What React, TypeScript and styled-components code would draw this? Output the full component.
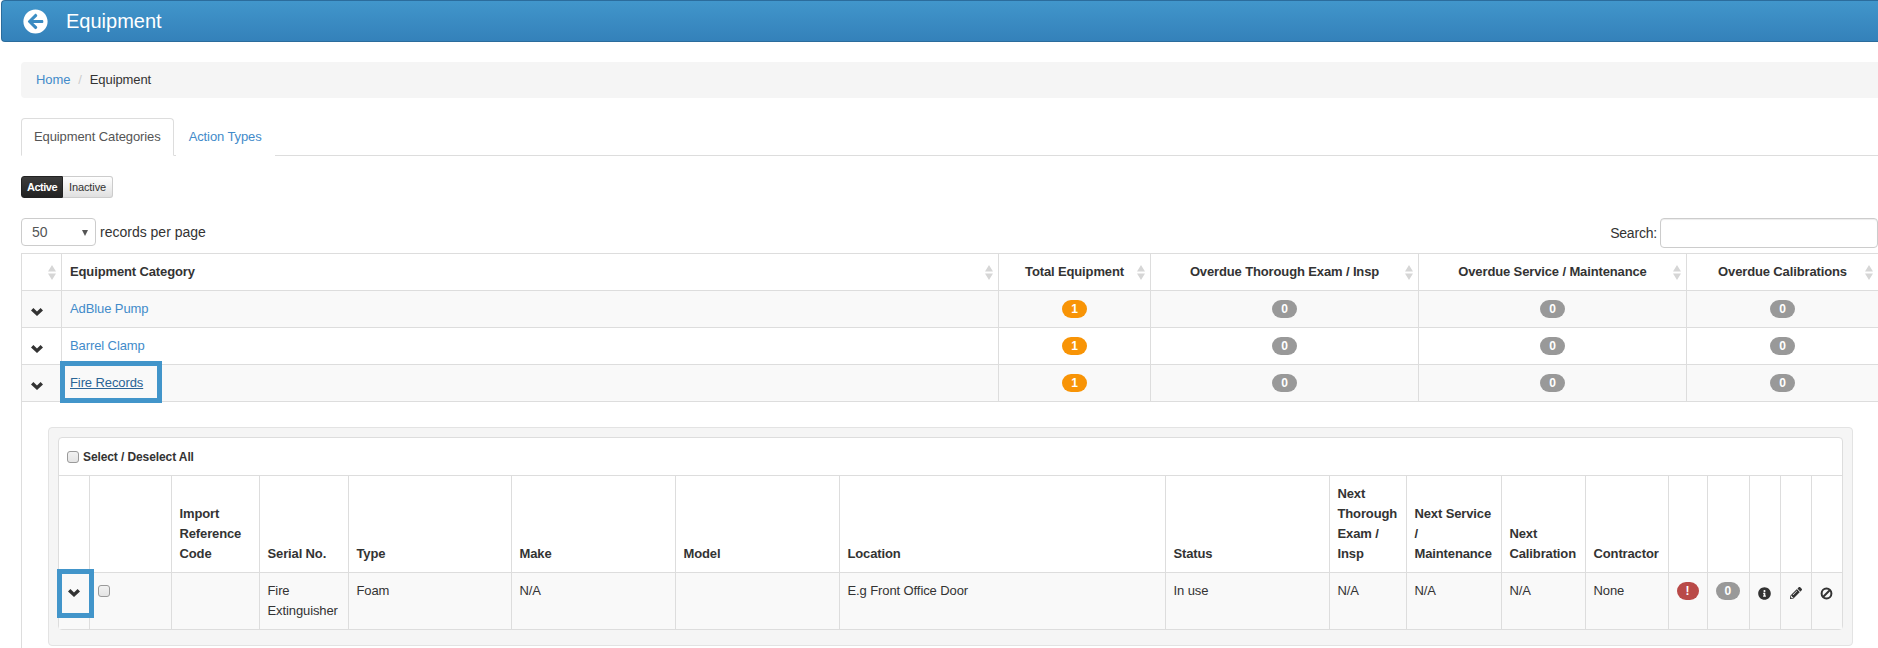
import React from "react";
import styled, { createGlobalStyle } from "styled-components";
import { FaArrowCircleLeft, FaInfoCircle, FaPencilAlt } from "react-icons/fa";

const Global = createGlobalStyle`
  html, body { margin: 0; padding: 0; background: #fff; }
  body { font-family: "Liberation Sans", Arial, sans-serif; font-size: 13px; line-height: 20px; color: #333; letter-spacing: -0.1px; }
  * { box-sizing: border-box; }
`;

const Page = styled.div`
  width: 1878px;
  height: 648px;
  overflow: hidden;
`;
const TopBar = styled.header`
  margin-left: 1px;
  height: 42px;
  display: flex;
  align-items: center;
  padding-left: 21px;
  gap: 18px;
  background: linear-gradient(to bottom, #4196cb, #3481ba);
  border: 1px solid #2b6c9c;
  border-right: none;
  border-radius: 4px 0 0 4px;
  color: #fff;
  font-size: 20px;
  letter-spacing: 0;
  svg { display: block; }
`;
const Content = styled.main`
  padding: 20px 0 0 21px;
`;
const Breadcrumb = styled.nav`
  height: 36px;
  display: flex;
  align-items: center;
  padding-left: 15px;
  background: #f5f5f5;
  border-radius: 4px 0 0 4px;
  margin-bottom: 20px;
`;
const Link = styled.a<{ $active?: boolean }>`
  color: ${(p) => (p.$active ? "#2a6496" : "#428bca")};
  text-decoration: ${(p) => (p.$active ? "underline" : "none")};
`;
const Sep = styled.span`
  color: #ccc;
  padding: 0 8px;
`;
const Tabs = styled.div`
  display: flex;
  height: 38px;
  border-bottom: 1px solid #ddd;
  margin-bottom: 20px;
`;
const Tab = styled.div<{ $active?: boolean }>`
  height: 38px;
  padding: 8px 12px;
  margin-right: 2px;
  color: ${(p) => (p.$active ? "#555" : "#428bca")};
  background: #fff;
  border: 1px solid ${(p) => (p.$active ? "#ddd" : "transparent")};
  border-bottom-color: ${(p) => (p.$active ? "#fff" : "transparent")};
  border-radius: 4px 4px 0 0;
`;
const Toggle = styled.div`
  display: flex;
  margin-bottom: 20px;
`;
const ToggleButton = styled.button<{ $on?: boolean }>`
  font: ${(p) => (p.$on ? "bold" : "normal")} 11px/20px "Liberation Sans", Arial, sans-serif;
  letter-spacing: ${(p) => (p.$on ? "-0.5px" : "-0.1px")};
  height: 22px;
  padding: 0;
  width: ${(p) => (p.$on ? 42 : 50)}px;
  color: ${(p) => (p.$on ? "#fff" : "#333")};
  background: ${(p) =>
    p.$on ? "linear-gradient(to bottom, #3c3c3c, #222)" : "linear-gradient(to bottom, #fff, #e0e0e0)"};
  border: 1px solid ${(p) => (p.$on ? "#222" : "#ccc")};
  border-radius: ${(p) => (p.$on ? "3px 0 0 3px" : "0 3px 3px 0")};
  border-left-width: ${(p) => (p.$on ? 1 : 0)}px;
`;
const FilterRow = styled.div`
  display: flex;
  justify-content: space-between;
  align-items: flex-start;
  height: 30px;
  margin-bottom: 5px;
`;
const Length = styled.div`
  display: flex;
  align-items: center;
  gap: 4px;
  font-size: 14px;
  height: 28px;
  letter-spacing: 0;
`;
const FakeSelect = styled.div`
  width: 75px;
  height: 28px;
  border: 1px solid #ccc;
  border-radius: 4px;
  padding: 3px 0 0 10px;
  color: #555;
  position: relative;
  font-size: 14px;
  &::after {
    content: "";
    position: absolute;
    right: 7px;
    top: 11px;
    border-left: 3.5px solid transparent;
    border-right: 3.5px solid transparent;
    border-top: 6px solid #555;
  }
`;
const SearchBox = styled.label`
  display: flex;
  align-items: center;
  gap: 3px;
  height: 30px;
  font-size: 14px;
  letter-spacing: -0.2px;
`;
const SearchInput = styled.input`
  width: 218px;
  height: 30px;
  border: 1px solid #ccc;
  border-radius: 4px;
  box-shadow: inset 0 1px 1px rgba(0, 0, 0, 0.075);
`;
const OuterTable = styled.table`
  border-collapse: collapse;
  table-layout: fixed;
  width: 1858px;
`;
const Col = styled.col<{ $w: number }>`
  width: ${(p) => p.$w}px;
`;
const OuterHead = styled.th<{ $left?: boolean }>`
  position: relative;
  height: 37px;
  padding: 8px;
  border: 1px solid #ddd;
  font-weight: bold;
  letter-spacing: -0.13px;
  text-align: ${(p) => (p.$left ? "left" : "center")};
`;
const SortIcon = styled.svg`
  position: absolute;
  right: 5px;
  top: 11px;
`;
const OuterRow = styled.tr<{ $striped?: boolean }>`
  background: ${(p) => (p.$striped ? "#f9f9f9" : "#fff")};
`;
const OuterCell = styled.td<{ $center?: boolean }>`
  position: relative;
  height: 37px;
  padding: 8px;
  border: 1px solid #ddd;
  vertical-align: top;
  text-align: ${(p) => (p.$center ? "center" : "left")};
`;
const ChevronIcon = styled.svg<{ $mt: number; $ml: number }>`
  display: block;
  margin: ${(p) => p.$mt}px 0 0 ${(p) => p.$ml}px;
`;
const Badge = styled.span<{ $tone: string }>`
  display: inline-block;
  min-width: 10px;
  margin-top: 1px;
  padding: 3px 9px;
  font-size: 12px;
  font-weight: bold;
  line-height: 12px;
  letter-spacing: 0;
  color: #fff;
  background: ${(p) => p.$tone};
  border-radius: 10px;
  vertical-align: top;
`;
const Callout = styled.div<{ $l: number; $t: number; $w: number; $h: number }>`
  position: absolute;
  z-index: 1;
  left: ${(p) => p.$l}px;
  top: ${(p) => p.$t}px;
  width: ${(p) => p.$w}px;
  height: ${(p) => p.$h}px;
  border: 5px solid #4295ca;
  pointer-events: none;
`;
const DetailCell = styled.td`
  padding: 25px 0 0 26px;
  border: 1px solid #ddd;
  height: 260px;
  vertical-align: top;
  background: #fff;
`;
const Well = styled.div`
  width: 1805px;
  height: 219px;
  padding: 9px;
  background: #f5f5f5;
  border: 1px solid #e3e3e3;
  border-radius: 4px;
`;
const Panel = styled.div`
  width: 1785px;
  background: #fff;
  border: 1px solid #ddd;
  border-radius: 4px;
`;
const PanelHeading = styled.div`
  height: 38px;
  display: flex;
  align-items: center;
  gap: 4px;
  padding-left: 8px;
  font-size: 12px;
  font-weight: bold;
  border-bottom: 1px solid #ddd;
`;
const Check = styled.input.attrs({ type: "checkbox" })`
  appearance: none;
  width: 12px;
  height: 12px;
  margin: 0;
  display: block;
  background: linear-gradient(to bottom, #f2f2f2, #e4e4e4);
  border: 1px solid #9a9a9a;
  border-radius: 3px;
`;
const InnerTable = styled.table`
  border-collapse: collapse;
  table-layout: fixed;
  width: 1783px;
`;
const InnerHead = styled.th`
  padding: 8px;
  height: 96px;
  border-left: 1px solid #ddd;
  border-bottom: 1px solid #ddd;
  font-weight: bold;
  letter-spacing: -0.13px;
  text-align: left;
  vertical-align: bottom;
  &:first-child { border-left: none; }
`;
const InnerCell = styled.td`
  position: relative;
  padding: 8px;
  height: 56px;
  background: #f9f9f9;
  border-left: 1px solid #ddd;
  vertical-align: top;
  &:first-child { border-left: none; }
`;
const IconCell = styled(InnerCell)`
  text-align: center;
  padding: 14px 0 0;
  color: #333;
  svg { display: inline-block; vertical-align: top; }
`;
const RowCheck = styled(Check)`
  margin-top: 4px;
`;

const Sort = () => (
  <SortIcon width="8" height="15" viewBox="0 0 8 15" aria-hidden="true">
    <path d="M4 0 L8 6.5 H0 Z M4 15 L8 8.5 H0 Z" fill="#d6d6d6" />
  </SortIcon>
);

const Chevron = ({ mt, ml }: { mt: number; ml: number }) => (
  <ChevronIcon $mt={mt} $ml={ml} width="12" height="8" viewBox="0 0 12 8" aria-hidden="true">
    <path d="M0 2.4 L2.4 0 L6 3.4 L9.6 0 L12 2.4 L6 8 Z" fill="#333" />
  </ChevronIcon>
);

const BanIcon = () => (
  <svg width="13" height="13" viewBox="0 0 13 13" aria-hidden="true">
    <circle cx="6.5" cy="6.5" r="4.9" fill="none" stroke="#333" strokeWidth="2" />
    <path d="M3 10 L10 3" stroke="#333" strokeWidth="2" />
  </svg>
);

const outerCols = [40, 937, 152, 268, 268, 192];
const innerCols = [30, 82, 88, 89, 163, 164, 164, 326, 164, 77, 95, 84, 83, 39, 42, 31, 31, 31];
const overdue = ["Overdue Thorough Exam / Insp", "Overdue Service / Maintenance", "Overdue Calibrations"];
const categories = ["AdBlue Pump", "Barrel Clamp", "Fire Records"];
const innerHeads: React.ReactNode[] = [
  "", "", "Import Reference Code", "Serial No.", "Type", "Make", "Model", "Location", "Status",
  "Next Thorough Exam / Insp",
  <>Next Service<br />/<br />Maintenance</>,
  "Next Calibration", "Contractor", "", "", "", "", "",
];
const innerValues = ["", "Fire Extinguisher", "Foam", "N/A", "", "E.g Front Office Door", "In use", "N/A", "N/A", "N/A", "None"];

export default function App() {
  return (
    <Page>
      <Global />
      <TopBar>
        <FaArrowCircleLeft size={25} />
        Equipment
      </TopBar>
      <Content>
        <Breadcrumb>
          <Link>Home</Link>
          <Sep>/</Sep>
          <span>Equipment</span>
        </Breadcrumb>
        <Tabs>
          <Tab $active>Equipment Categories</Tab>
          <Tab>Action Types</Tab>
        </Tabs>
        <Toggle>
          <ToggleButton $on>Active</ToggleButton>
          <ToggleButton>Inactive</ToggleButton>
        </Toggle>
        <FilterRow>
          <Length>
            <FakeSelect>50</FakeSelect>
            records per page
          </Length>
          <SearchBox>
            Search:
            <SearchInput />
          </SearchBox>
        </FilterRow>
        <OuterTable>
          <colgroup>
            {outerCols.map((w, i) => (
              <Col key={i} $w={w} />
            ))}
          </colgroup>
          <thead>
            <tr>
              <OuterHead $left><Sort /></OuterHead>
              <OuterHead $left>Equipment Category<Sort /></OuterHead>
              <OuterHead>Total Equipment<Sort /></OuterHead>
              {overdue.map((h) => (
                <OuterHead key={h}>{h}<Sort /></OuterHead>
              ))}
            </tr>
          </thead>
          <tbody>
            {categories.map((name, i) => (
              <OuterRow key={name} $striped={i !== 1}>
                <OuterCell><Chevron mt={9} ml={1} /></OuterCell>
                <OuterCell>
                  <Link $active={i === 2}>{name}</Link>
                  {i === 2 && <Callout $l={-2} $t={-4} $w={102} $h={42} />}
                </OuterCell>
                <OuterCell $center><Badge $tone="#f89406">1</Badge></OuterCell>
                {overdue.map((h) => (
                  <OuterCell $center key={h}><Badge $tone="#999">0</Badge></OuterCell>
                ))}
              </OuterRow>
            ))}
            <tr>
              <DetailCell colSpan={6}>
                <Well>
                  <Panel>
                    <PanelHeading>
                      <Check />
                      Select / Deselect All
                    </PanelHeading>
                    <InnerTable>
                      <colgroup>
                        {innerCols.map((w, i) => (
                          <Col key={i} $w={w} />
                        ))}
                      </colgroup>
                      <thead>
                        <tr>
                          {innerHeads.map((h, i) => (
                            <InnerHead key={i}>{h}</InnerHead>
                          ))}
                        </tr>
                      </thead>
                      <tbody>
                        <tr>
                          <InnerCell>
                            <Chevron mt={8} ml={1} />
                            <Callout $l={-2} $t={-4} $w={37} $h={49} />
                          </InnerCell>
                          <InnerCell><RowCheck /></InnerCell>
                          {innerValues.map((v, i) => (
                            <InnerCell key={i}>{v}</InnerCell>
                          ))}
                          <InnerCell><Badge $tone="#b94a48">!</Badge></InnerCell>
                          <InnerCell><Badge $tone="#999">0</Badge></InnerCell>
                          <IconCell><FaInfoCircle size={13} /></IconCell>
                          <IconCell><FaPencilAlt size={12} /></IconCell>
                          <IconCell><BanIcon /></IconCell>
                        </tr>
                      </tbody>
                    </InnerTable>
                  </Panel>
                </Well>
              </DetailCell>
            </tr>
          </tbody>
        </OuterTable>
      </Content>
    </Page>
  );
}
